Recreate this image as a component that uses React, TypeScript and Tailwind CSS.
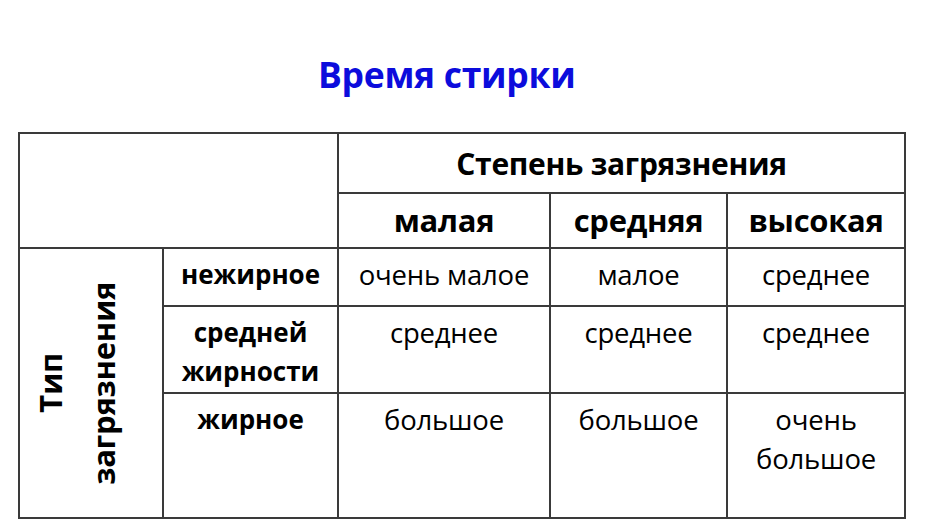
import React from "react";

const font = { fontFamily: '"Open Sans", "Noto Sans", sans-serif' };

export default function App() {
  const cell = "border-2 border-[#3a3a3a] align-top text-center pt-[6px] leading-[39px]";
  const data = `${cell} text-[27.5px] text-black font-normal tracking-[-0.2px]`;
  const lbl = `${cell} text-[26px] text-black font-bold`;
  const head = "border-2 border-[#3a3a3a] text-center align-middle text-[31px] font-bold text-black tracking-[-0.3px]";
  return (
    <div className="w-[930px] h-[527px] bg-white overflow-hidden" style={font}>
      <div className="pt-[50px] pl-[318px] h-[132px]">
        <h1 className="text-[35.5px] leading-[48px] font-bold text-[#0c0cdc] tracking-[-0.3px]">Время стирки</h1>
      </div>
      <table className="ml-[18px] border-collapse table-fixed w-[886px]">
        <colgroup>
          <col className="w-[144px]" />
          <col className="w-[175px]" />
          <col className="w-[212px]" />
          <col className="w-[177px]" />
          <col className="w-[178px]" />
        </colgroup>
        <tbody>
          <tr className="h-[60px]">
            <td colSpan={2} rowSpan={2} className="border-2 border-[#3a3a3a]"></td>
            <td colSpan={3} className="border-2 border-[#3a3a3a] text-center align-middle text-[30px] font-bold text-black tracking-[-0.3px]">
              Степень загрязнения
            </td>
          </tr>
          <tr className="h-[55px]">
            <td className={head}>малая</td>
            <td className={head}>средняя</td>
            <td className={head}>высокая</td>
          </tr>
          <tr className="h-[58px]">
            <td rowSpan={3} className="border-2 border-[#3a3a3a] align-middle">
              <div className="flex items-center justify-center pr-[28px]">
                <div className="[writing-mode:vertical-rl] rotate-180 text-center text-[31px] leading-[53px] font-bold text-black tracking-[-0.3px]">
                  Тип
                  <br />
                  загрязнения
                </div>
              </div>
            </td>
            <td className={lbl}>нежирное</td>
            <td className={data}>очень малое</td>
            <td className={data}>малое</td>
            <td className={data}>среднее</td>
          </tr>
          <tr className="h-[87px]">
            <td className={lbl}>
              средней
              <br />
              жирности
            </td>
            <td className={data}>среднее</td>
            <td className={data}>среднее</td>
            <td className={data}>среднее</td>
          </tr>
          <tr className="h-[125px]">
            <td className={lbl}>жирное</td>
            <td className={data}>большое</td>
            <td className={data}>большое</td>
            <td className={data}>
              очень
              <br />
              большое
            </td>
          </tr>
        </tbody>
      </table>
    </div>
  );
}
